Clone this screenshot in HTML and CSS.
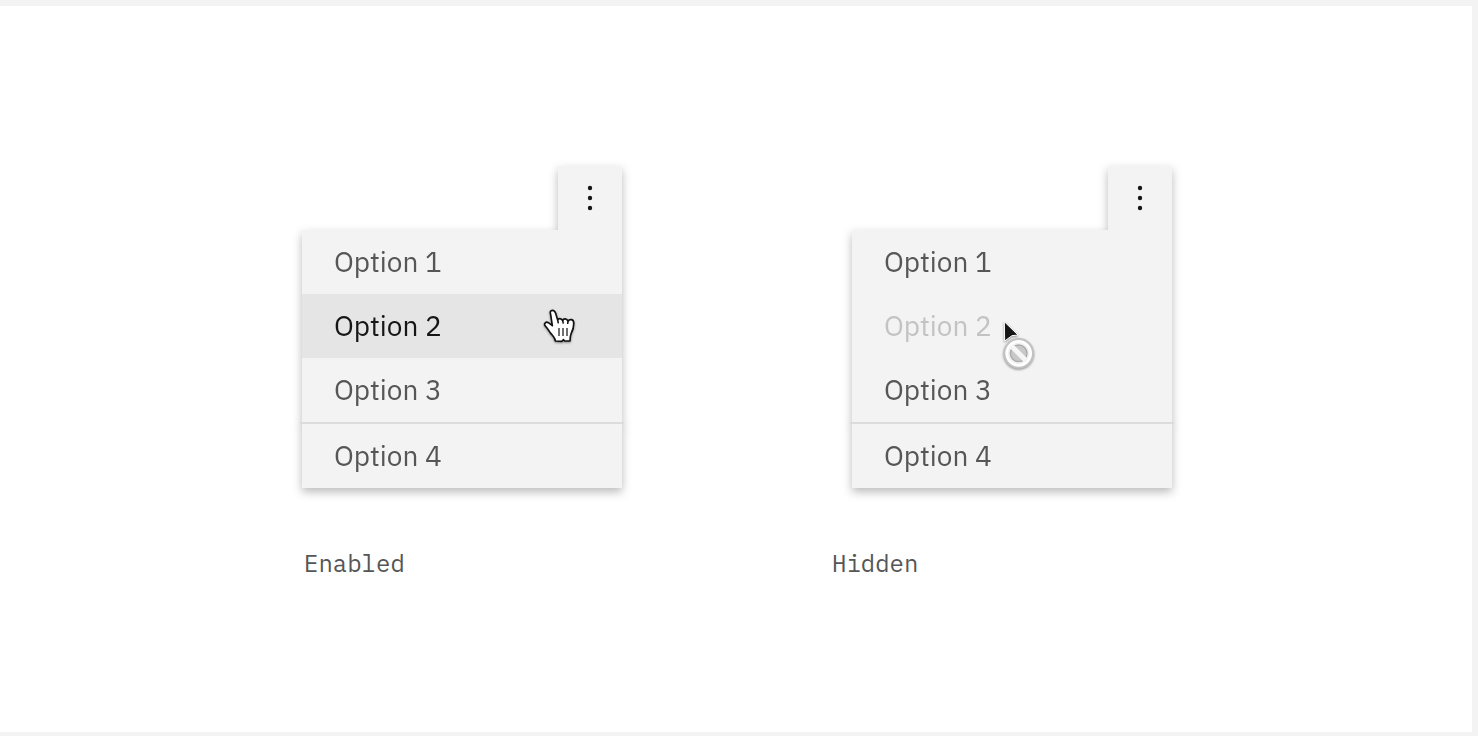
FILE: index.html
```html
<!DOCTYPE html>
<html lang="en">
<head>
<meta charset="utf-8">
<meta name="viewport" content="width=device-width, initial-scale=1">
<title>Overflow menu states</title>
<link rel="stylesheet" href="styles.css">
</head>
<body>
<main class="stage">
  <div class="examples">
    <figure class="example">
      <div class="overflow">
        <button class="trigger" type="button" aria-label="Open menu" aria-expanded="true">
          <svg class="dots" viewBox="0 0 32 32" aria-hidden="true"><circle cx="16" cy="6" r="2.2"/><circle cx="16" cy="16" r="2.2"/><circle cx="16" cy="26" r="2.2"/></svg>
        </button>
        <ul class="menu">
          <li><button class="option" type="button">Option 1</button></li>
          <li><button class="option option-hover" type="button">Option 2</button></li>
          <li><button class="option" type="button">Option 3</button></li>
          <li class="divider" role="separator"></li>
          <li><button class="option" type="button">Option 4</button></li>
        </ul>
        <svg class="cursor cursor-hand" viewBox="0 0 180 165" aria-hidden="true">
          <path d="M62 44C59 35 62 31 67 31C72 31 75 34 77 40L83 60C84 55 94 53 98 62C101 54 111 55 114 64C118 56 130 57 131 67C132 80 129 90 124 99C120 107 120 112 120 123L104 123L100 119L96 124L76 123C76 114 69 108 63 101C56 93 53 84 45 77C41 70 48 64 55 68L67 77Z" fill="#fff" stroke="#111" stroke-width="5" stroke-linejoin="round"/>
          <path d="M83 60L85 70M98 62L100 71M114 64L113 72" fill="none" stroke="#111" stroke-width="4.5"/>
          <path d="M87 84V108M99 84V108M111 84V108" fill="none" stroke="#111" stroke-width="3.6"/>
        </svg>
      </div>
      <figcaption class="caption caption-inset">Enabled</figcaption>
    </figure>
    <figure class="example example-offset">
      <div class="overflow">
        <button class="trigger" type="button" aria-label="Open menu" aria-expanded="true">
          <svg class="dots" viewBox="0 0 32 32" aria-hidden="true"><circle cx="16" cy="6" r="2.2"/><circle cx="16" cy="16" r="2.2"/><circle cx="16" cy="26" r="2.2"/></svg>
        </button>
        <ul class="menu">
          <li><button class="option" type="button">Option 1</button></li>
          <li><button class="option" type="button" disabled>Option 2</button></li>
          <li><button class="option" type="button">Option 3</button></li>
          <li class="divider" role="separator"></li>
          <li><button class="option" type="button">Option 4</button></li>
        </ul>
        <svg class="cursor cursor-blocked" viewBox="0 0 180 210" aria-hidden="true">
          <path d="M43 35L84 75L66 77L44 93Z" fill="#161616" stroke="#fff" stroke-width="3"/>
          <circle cx="86" cy="130" r="43" fill="#fff" stroke="#c2c2c2" stroke-width="6"/>
          <circle cx="86" cy="130" r="32" fill="#f0f0f0"/>
          <circle cx="86" cy="130" r="25" fill="#c8c8c8" stroke="#aaa" stroke-width="4"/>
          <path d="M65 109L107 151" stroke="#f6f6f6" stroke-width="15"/>
        </svg>
      </div>
      <figcaption class="caption">Hidden</figcaption>
    </figure>
  </div>
</main>
</body>
</html>
```
FILE: styles.css
```css
* {
  box-sizing: border-box;
}

body {
  margin: 0;
  min-height: 100vh;
  display: flex;
  padding: 6px 6px 4px 0;
  background: #f3f3f3;
}

.stage {
  flex: 1;
  padding: 160px 24px 148px 26px;
  background: #fff;
}

.examples {
  display: flex;
  justify-content: center;
  flex-wrap: wrap;
  gap: 48px 210px;
}

.example {
  margin: 0;
}

.example-offset .overflow {
  margin-left: 20px;
}

.overflow {
  position: relative;
  display: flex;
  flex-direction: column;
  width: 320px;
  filter: drop-shadow(0 4px 5px rgba(0, 0, 0, 0.27));
}

.trigger {
  align-self: flex-end;
  display: grid;
  place-items: center;
  width: 64px;
  height: 64px;
  padding: 0;
  border: 0;
  background: #f3f3f3;
}

.dots {
  width: 32px;
  height: 32px;
  fill: #161616;
}

.menu {
  margin: 0;
  padding: 0;
  list-style: none;
  background: #f3f3f3;
}

.option {
  display: block;
  width: 100%;
  height: 64px;
  padding: 0 32px;
  border: 0;
  background: transparent;
  color: #565656;
  font-family: "IBM Plex Sans", Roboto, sans-serif;
  font-size: 28px;
  line-height: 32px;
  text-align: left;
}

.option-hover {
  background: #e5e5e5;
  color: #161616;
}

.option:disabled {
  color: #c3c3c3;
}

.divider {
  height: 2px;
  margin: 0 -2px;
  background: #dcdcdc;
}

.cursor {
  position: absolute;
  filter: drop-shadow(0 1px 1px rgba(0, 0, 0, 0.4));
}

.cursor-hand {
  left: 228px;
  top: 134px;
  width: 60px;
  height: 55px;
}

.cursor-blocked {
  left: 138px;
  top: 144px;
  width: 60px;
  height: 70px;
}

.caption {
  margin-top: 60px;
  color: #565656;
  font-family: "IBM Plex Mono", "Liberation Mono", monospace;
  font-size: 24px;
  line-height: 30px;
}

.caption-inset {
  padding-left: 2px;
}
```
